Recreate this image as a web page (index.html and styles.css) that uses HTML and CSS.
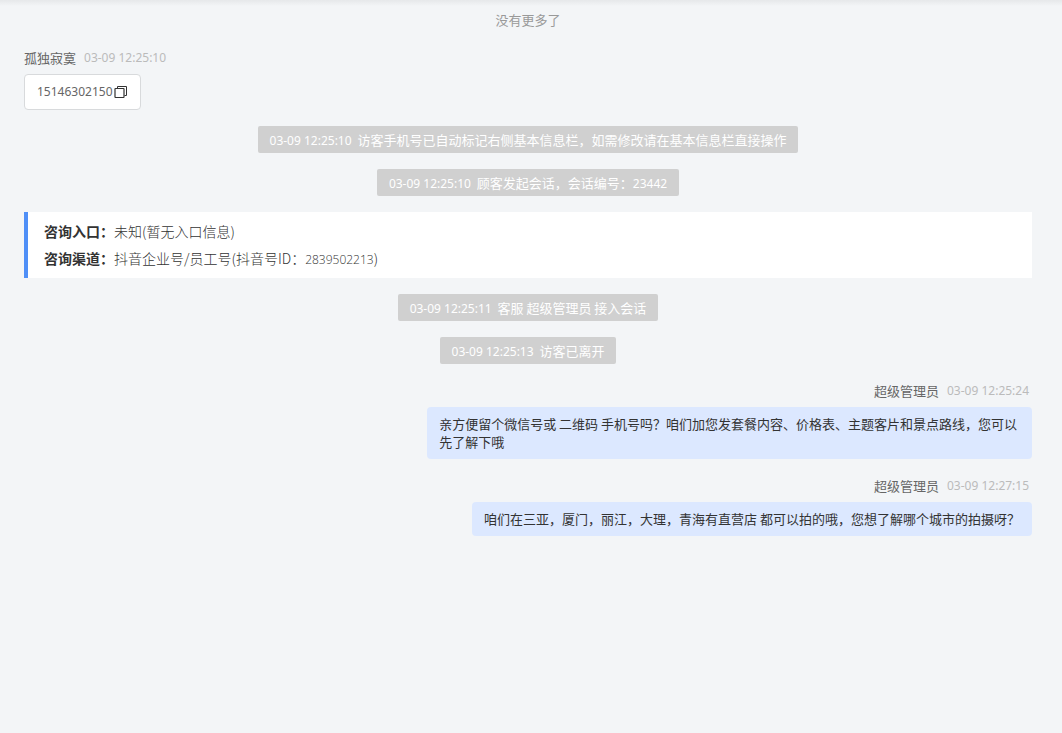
FILE: index.html
```html
<!DOCTYPE html>
<html lang="zh-CN">
<head>
  <meta charset="UTF-8">
  <meta name="viewport" content="width=device-width, initial-scale=1.0">
  <title>会话记录</title>
  <link rel="stylesheet" href="styles.css">
</head>
<body>
  <main class="chat">
    <p class="no-more">没有更多了</p>

    <div class="message">
      <div class="sender">孤独寂寞<time>03-09 12:25:10</time></div>
      <div class="bubble">
        <span class="phone">15146302150</span>
        <button class="copy" type="button" aria-label="复制">
          <svg width="14" height="14" viewBox="0 0 14 14" fill="none" stroke="#333">
            <path d="M3.5 3.5V1.5H12.5V10.5H10.5" />
            <rect x="1" y="3.5" width="9" height="9" rx="0.5" stroke-width="1.2" />
          </svg>
        </button>
      </div>
    </div>

    <p class="notice"><time>03-09 12:25:10</time> 访客手机号已自动标记右侧基本信息栏，如需修改请在基本信息栏直接操作</p>
    <p class="notice"><time>03-09 12:25:10</time> 顾客发起会话，会话编号：<span class="num">23442</span></p>

    <dl class="source">
      <div class="source-row">
        <dt>咨询入口：</dt>
        <dd>未知(暂无入口信息)</dd>
      </div>
      <div class="source-row">
        <dt>咨询渠道：</dt>
        <dd>抖音企业号/员工号(抖音号ID：<span class="source-id">2839502213</span>)</dd>
      </div>
    </dl>

    <p class="notice"><time>03-09 12:25:11</time> 客服 超级管理员 接入会话</p>
    <p class="notice"><time>03-09 12:25:13</time> 访客已离开</p>

    <div class="message mine">
      <div class="sender">超级管理员<time>03-09 12:25:24</time></div>
      <div class="bubble">亲方便留个微信号或 二维码 手机号吗？咱们加您发套餐内容、价格表、主题客片和景点路线，您可以先了解下哦</div>
    </div>

    <div class="message mine">
      <div class="sender">超级管理员<time>03-09 12:27:15</time></div>
      <div class="bubble">咱们在三亚，厦门，丽江，大理，青海有直营店 都可以拍的哦，您想了解哪个城市的拍摄呀？</div>
    </div>
  </main>
</body>
</html>
```

FILE: styles.css
```css
* {
  box-sizing: border-box;
}

body {
  margin: 0;
  font-family: "Noto Sans CJK SC", sans-serif;
  font-size: 13px;
  line-height: 18px;
  color: #333;
  background-color: #f3f5f7;
}

p, dl, dd {
  margin: 0;
}

.chat {
  display: flex;
  flex-direction: column;
  align-items: center;
  gap: 16px;
  min-height: 100vh;
  padding: 9px 30px 24px 24px;
  /* shadow of the bar above the list */
  background: linear-gradient(#e6e8ea, #f3f5f7) no-repeat top / 100% 6px;
}

.no-more {
  line-height: 22px;
  color: #999;
}

/* digits */
time, .num, .phone {
  font-family: "Noto Sans", sans-serif;
  font-size: 12px;
  line-height: 12px;
}

time {
  display: inline-block;
  min-width: 85px;
}

/* messages */
.message {
  display: flex;
  flex-direction: column;
  align-items: flex-start;
  gap: 5px;
  width: 100%;
}

.sender {
  display: flex;
  align-items: center;
  gap: 8px;
  line-height: 22px;
  color: #666;
}

.sender time {
  color: #bbb;
}

.bubble {
  display: flex;
  align-items: center;
  max-width: 60%;
  min-height: 34px;
  padding: 8px 12px;
  border: 1px solid #d8dadc;
  border-radius: 4px;
  color: #666;
  background-color: #fff;
}

.phone {
  min-width: 77px;
  line-height: 18px;
}

.copy {
  display: flex;
  padding: 0;
  border: none;
  background: none;
  cursor: pointer;
}

.mine {
  align-items: flex-end;
}

.mine .bubble {
  border: none;
  color: #333;
  background-color: #dce8ff;
}

/* system notices */
.notice {
  padding: 5px 12px 4px;
  border-radius: 2px;
  color: #fff;
  background-color: #d0d0d0;
}

/* where the visitor came from */
.source {
  width: 100%;
  padding: 6px 16px;
  border-left: 4px solid #4f8ff7;
  font-size: 14px;
  line-height: 27px;
  background-color: #fff;
}

.source-row {
  display: flex;
}

.source dt {
  font-weight: bold;
}

.source dd {
  font-weight: 300;
}

.source-id {
  font-family: "Open Sans", sans-serif;
  font-size: 12px;
  line-height: 12px;
}
```
